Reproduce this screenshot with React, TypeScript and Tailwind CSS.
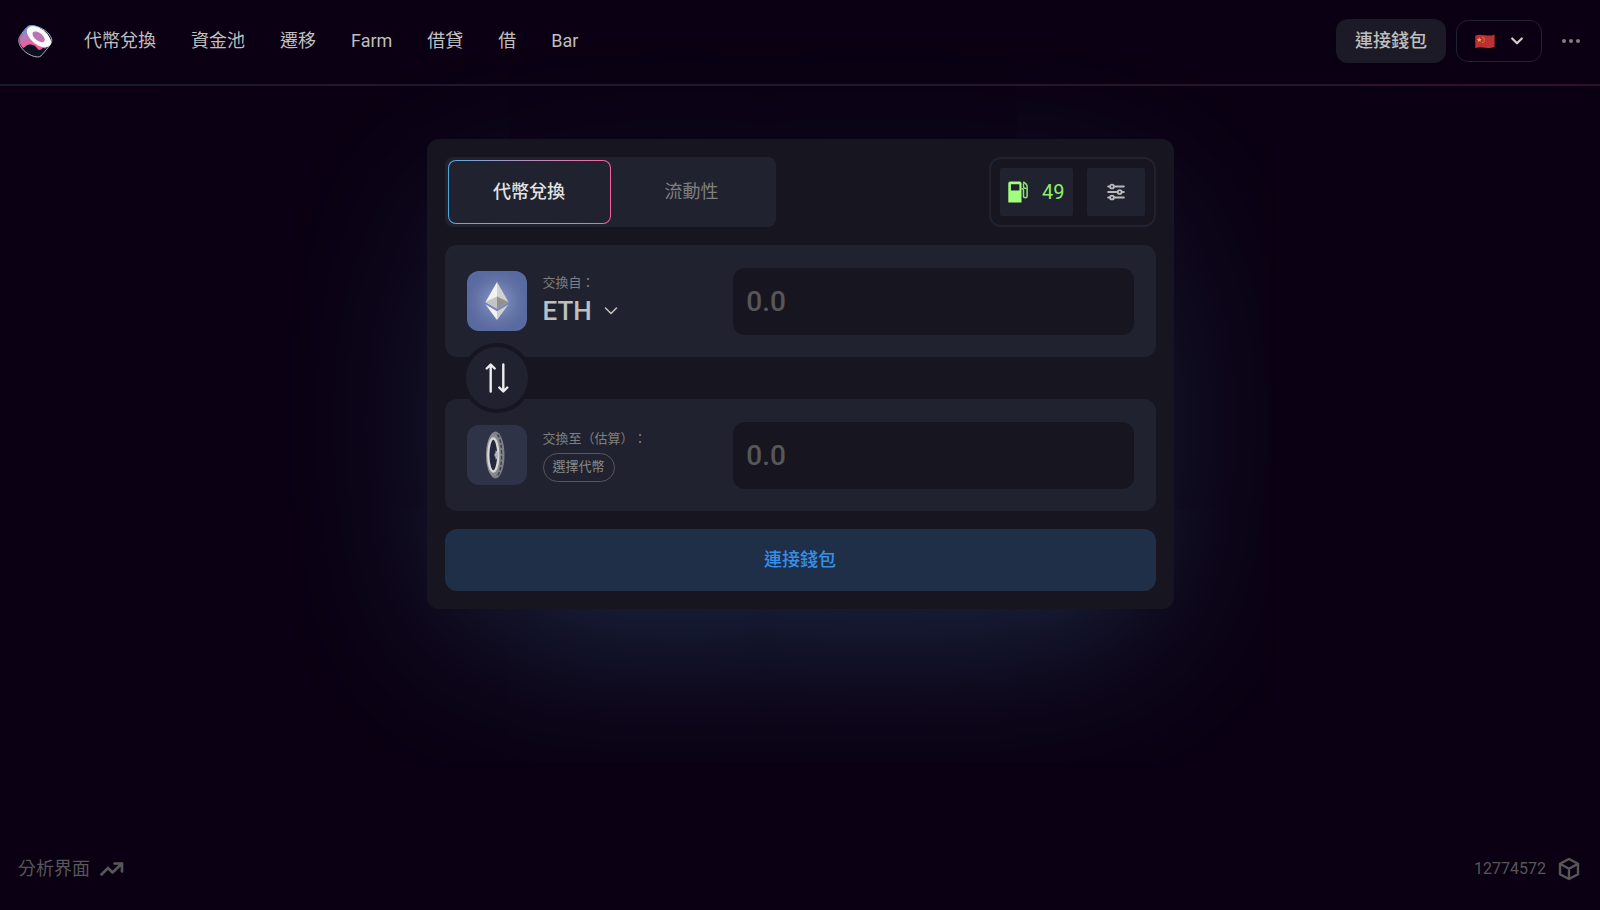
import React, { useState } from 'react'

const navLinks = ['代幣兌換', '資金池', '遷移', 'Farm', '借貸', '借', 'Bar']

function Logo() {
  return (
    <svg viewBox="0 0 35 33" className="w-[35px] h-[33px]" aria-hidden="true">
      <defs>
        <linearGradient id="logo-side" x1="0.3" y1="0" x2="0.45" y2="1">
          <stop offset="0" stopColor="#5fa3dd" />
          <stop offset="0.35" stopColor="#a77fc0" />
          <stop offset="0.7" stopColor="#e8639f" />
          <stop offset="1" stopColor="#f1599c" />
        </linearGradient>
      </defs>
      <path d="M10.500 1.200C8.600 1.600 1.800 10.600 1 13.600c-1.400 6 4.200 13.400 12.400 16.900 4.300 1.900 8.200 1.900 9.700.3 2-2.100 9.600-11 10.500-13.600C35 12.500 29.500 6 22.500 2.900 17.800.8 13.300.4 10.500 1.200Z" fill="#0e0f23" stroke="#c3c3cd" strokeWidth="0.9" />
      <path d="M9.800 1.800C7.900 3 2.500 10.500 1.700 13.200c-.8 3 .4 6.300 3.300 9.800 1.700-.2 3.300-2.900 5.300-3.200 2.800-.6 4.300.3 6 .7 1.800.6 3 4 5 4.600 1.700 0 2.500-1.800 3.700-2.100 1.300 0 1.700.7 2.500.4L33.400 17Z" fill="url(#logo-side)" />
      <path d="M10.200 2.200C12 .8 16 .8 20.500 2.400" fill="none" stroke="#5fa3dd" strokeWidth="1.500" />
      <ellipse cx="21" cy="11.700" rx="14" ry="7.900" transform="rotate(38 21 11.700)" fill="#fbf8fc" />
      <ellipse cx="20.600" cy="11.800" rx="7.200" ry="3.800" transform="rotate(38 20.600 11.800)" fill="#bd72b6" />
    </svg>
  )
}

function ChinaFlag() {
  return (
    <svg viewBox="0 0 20 15" className="w-5 h-[15px]" aria-hidden="true">
      <path d="M.3 1.700C4 .2 6.500.9 10 1.300s6.500.5 9.600-.9v12.300c-3.200 1.500-6 1.500-9.400 1.100-3.600-.5-6.400-.9-9.900.4Z" fill="#bb2f35" />
      <path d="M4.300 3.200l.7 1.700 1.700.1-1.300 1.200.4 1.800-1.500-1-1.500 1 .4-1.800-1.300-1.200 1.700-.1Z" fill="#e8b53a" />
      <g fill="#e8b53a">
        <circle cx="8" cy="3.200" r="0.600" />
        <circle cx="9.200" cy="4.900" r="0.600" />
        <circle cx="9.100" cy="7" r="0.600" />
        <circle cx="7.800" cy="8.500" r="0.600" />
      </g>
    </svg>
  )
}

function ChevronSolid() {
  return (
    <svg viewBox="0 0 12 8" className="w-3 h-2" fill="none" stroke="#cfcfcf" strokeWidth="2.200" strokeLinecap="round" strokeLinejoin="round" aria-hidden="true">
      <path d="M1.200 1.500 6 6.300l4.800-4.800" />
    </svg>
  )
}

function GasIcon() {
  return (
    <svg viewBox="0 0 20 22" className="w-5 h-[22px]" aria-hidden="true">
      <path fillRule="evenodd" d="M2.500.5h9c1.200 0 2 .8 2 2v19H.3V2.500C.3 1.300 1.200.5 2.500.5ZM2.900 3.300v6.200h8.500V3.300Z" fill="#a1ff7d" />
      <path d="M13.500 7.800h.8c.8 0 1.200.5 1.200 1.200v6.300c0 1.900 3.600 1.900 3.600 0V5.600c0-1-.4-1.800-1-2.500L15.300.8" fill="none" stroke="#8fe670" strokeWidth="1.500" />
      <path d="M15.500 2.200v3.600c0 1.100 1 1.800 3.300 1.800" fill="none" stroke="#8fe670" strokeWidth="1.400" />
    </svg>
  )
}

function SlidersIcon() {
  return (
    <svg viewBox="0 0 18 18" className="w-[18px] h-[18px]" fill="none" stroke="#b9b9bb" strokeWidth="1.900" strokeLinecap="round" aria-hidden="true">
      <path d="M1.200 3.500h1.700M7.200 3.500h9.600M1.200 9h9.300M14.800 9h2M1.200 14.500h1.700M7.200 14.500h9.600" />
      <circle cx="5" cy="3.500" r="1.900" />
      <circle cx="12.700" cy="9" r="1.900" />
      <circle cx="5" cy="14.500" r="1.900" />
    </svg>
  )
}

function EthIcon() {
  return (
    <svg viewBox="0 0 60 60" className="w-[60px] h-[60px] rounded-xl shrink-0" aria-hidden="true">
      <defs>
        <radialGradient id="eth-bg">
          <stop offset="0" stopColor="#8697ca" />
          <stop offset="0.700" stopColor="#6373a6" />
          <stop offset="1" stopColor="#586aa0" />
        </radialGradient>
      </defs>
      <rect width="60" height="60" fill="url(#eth-bg)" />
      <path d="M30 11 18.500 31 30 37.500Z" fill="#f2f2f2" />
      <path d="M30 11 41.500 31 30 37.500Z" fill="#d2d2d2" />
      <path d="M30 25.500 18.500 31 30 37.500Z" fill="#c4c4c4" />
      <path d="M30 25.500 41.500 31 30 37.500Z" fill="#929292" />
      <path d="M18.500 33.500 30 40.300V49Z" fill="#f2f2f2" />
      <path d="M41.500 33.500 30 40.300V49Z" fill="#cfcfcf" />
    </svg>
  )
}

function CoinIcon() {
  return (
    <svg viewBox="0 0 60 60" className="w-[60px] h-[60px] rounded-xl shrink-0" aria-hidden="true">
      <rect width="60" height="60" fill="#2e3348" />
      <ellipse cx="28.500" cy="30" rx="9" ry="23.500" fill="#808184" />
      <path d="M30.500 9.500c3 3.500 4 12 4 20.500s-1 17-4 20.500" fill="none" stroke="#3a3f52" strokeWidth="1.500" strokeDasharray="3.500 2" />
      <ellipse cx="26.300" cy="30" rx="7.300" ry="21" fill="#8a8b8e" />
      <ellipse cx="26.300" cy="30" rx="5" ry="16.500" fill="#23283f" stroke="#d6d6d6" strokeWidth="2.300" />
      <path d="M28.500 25.500c2 .5 3 2.500 3 4.500s-1 4-3 4.500v-3h-1v-3h1Z" fill="#b5b6ba" />
    </svg>
  )
}

function SwapArrows() {
  return (
    <svg viewBox="0 0 26 30" className="w-[26px] h-[30px]" fill="none" stroke="#ececec" strokeWidth="2.400" strokeLinecap="round" strokeLinejoin="round" aria-hidden="true">
      <path d="M6.700 28.500V2M2.700 5.500l4-4 4 4" />
      <path d="M19.300 1.500V28M15.300 24.500l4 4 4-4" />
    </svg>
  )
}

interface AmountPropTypes {
  label: string;
  value: string;
  onChange: (value: string) => void;
}

function AmountInput({ label, value, onChange }: AmountPropTypes) {
  return (
    <div className="w-3/5 rounded-xl bg-[#171520] px-[13px]">
      <input
        aria-label={label}
        placeholder="0.0"
        inputMode="decimal"
        value={value}
        onChange={(e) => onChange(e.target.value)}
        className="block w-full h-[67px] bg-transparent text-[28px] font-medium text-[#e3e3e3] placeholder:text-[#575757] outline-none"
      />
    </div>
  )
}

export default function App() {
  const [from, setFrom] = useState('')
  const [to, setTo] = useState('')

  return (
    <div
      lang="zh-TW"
      className="min-h-screen flex flex-col bg-[#0b0013] text-[18px] leading-6 text-[#bfbfbf] font-['Roboto','Noto_Sans_CJK_TC',sans-serif] [text-spacing-trim:space-all]"
    >
      {/* header */}
      <header>
        <div className="flex items-center justify-between h-[84px] pl-[18px] pr-[10px] pb-[2px]">
          <div className="flex items-center gap-[31px]">
            <a href="#home" aria-label="Sushi"><Logo /></a>
            <nav className="flex items-center gap-[35px]">
              {navLinks.map((name) => (
                <a key={name} href={`#${name}`} className="whitespace-nowrap">{name}</a>
              ))}
            </nav>
          </div>
          <div className="flex items-center gap-[10px]">
            <button className="h-11 px-[19px] rounded-xl bg-[#1b1a26] font-medium">連接錢包</button>
            <button aria-label="語言" className="flex items-center justify-center gap-4 w-[86px] h-[42px] rounded-xl border border-[#202231]">
              <ChinaFlag />
              <ChevronSolid />
            </button>
            <button aria-label="更多" className="flex items-center justify-center w-[38px] h-10">
              <svg viewBox="0 0 18 4" className="w-[18px] h-1" fill="#7f7f7f" aria-hidden="true">
                <circle cx="2" cy="2" r="2" />
                <circle cx="9" cy="2" r="2" />
                <circle cx="16" cy="2" r="2" />
              </svg>
            </button>
          </div>
        </div>
        <div className="h-[2px] bg-linear-to-r from-[#161c2d] to-[#2f1229]" />
      </header>

      {/* swap card */}
      <main className="flex-1 flex flex-col items-center pt-[53px]">
        <div className="w-full max-w-[747px] p-[18px] rounded-xl bg-[#171520] shadow-[0_50px_180px_-47px_rgba(75,160,205,0.38)]">
          <div className="flex items-center justify-between">
            <div className="flex h-[70px] p-[3px] rounded-lg bg-[#202230]">
              <div className="w-[163px] p-px rounded-lg bg-linear-to-r from-[#4fa9e0] to-[#f5619f]">
                <button className="w-full h-full rounded-[7px] bg-[#202230] font-medium text-[#e3e3e3]">代幣兌換</button>
              </div>
              <button className="w-[162px] text-[#7f7f7f]">流動性</button>
            </div>
            <div className="flex items-center gap-[14px] h-[70px] px-[9px] rounded-xl border-2 border-[#202230]">
              <div className="flex items-center gap-[14px] h-12 px-2 rounded-xs bg-[#202230] text-[20px] text-[#8ff06d]">
                <GasIcon />
                <span>49</span>
              </div>
              <button aria-label="設定" className="flex items-center justify-center w-[58px] h-12 rounded-xs bg-[#202230]">
                <SlidersIcon />
              </button>
            </div>
          </div>

          <section className="flex items-center justify-between h-28 mt-[18px] px-[22px] rounded-xl bg-[#202230]">
            <div className="flex items-center gap-4">
              <EthIcon />
              <div className="flex flex-col items-start">
                <span className="text-[13px] leading-5 text-[#7f7f7f]">交換自：</span>
                <button className="flex items-center gap-3 text-[26px] leading-9 font-medium">
                  ETH
                  <svg viewBox="0 0 14 8" className="w-[14px] h-2" fill="none" stroke="#bfbfbf" strokeWidth="1.600" strokeLinecap="round" strokeLinejoin="round" aria-hidden="true">
                    <path d="M1.500 1 7 6.500 12.500 1" />
                  </svg>
                </button>
              </div>
            </div>
            <AmountInput label="交換自" value={from} onChange={setFrom} />
          </section>

          {/* overlaps both panels */}
          <div className="relative z-10 flex items-center h-[42px] pl-[17px]">
            <button
              aria-label="對調"
              onClick={() => { setFrom(to); setTo(from) }}
              className="flex items-center justify-center shrink-0 w-[70px] h-[70px] rounded-full border-4 border-[#171520] bg-[#202230]"
            >
              <SwapArrows />
            </button>
          </div>

          <section className="flex items-center justify-between h-28 px-[22px] rounded-xl bg-[#202230]">
            <div className="flex items-center gap-4">
              <CoinIcon />
              <div className="flex flex-col items-start gap-1">
                <span className="text-[13px] leading-5 text-[#7f7f7f]">交換至（估算）：</span>
                <button className="h-[29px] px-[9px] rounded-full border border-[#575757] text-[13px] text-[#8a8a8a]">選擇代幣</button>
              </div>
            </div>
            <AmountInput label="交換至" value={to} onChange={setTo} />
          </section>

          <button className="w-full h-[62px] mt-[18px] rounded-xl bg-[#1e2f47] font-medium text-[#368fe8]">連接錢包</button>
        </div>
      </main>

      {/* footer */}
      <footer className="flex items-center justify-between pl-[18px] pr-5 pb-[29px] text-[#575757]">
        <a href="#analytics" className="flex items-center gap-[10px]">
          分析界面
          <svg viewBox="0 0 24 14" className="w-6 h-[14px]" fill="none" stroke="currentColor" strokeWidth="2.600" strokeLinecap="round" strokeLinejoin="round" aria-hidden="true">
            <path d="M1.500 12.500 8 6l4.500 4.500L22 1.500M14.500 1.500H22V9.500" />
          </svg>
        </a>
        <a href="#block" className="flex items-center gap-3 text-[16px]">
          12774572
          <svg viewBox="0 0 22 24" className="w-[22px] h-6" fill="none" stroke="currentColor" strokeWidth="2.400" strokeLinejoin="round" aria-hidden="true">
            <path d="M11 2 20 6.800v10.400L11 22 2 17.200V6.800ZM2 6.800l9 4.900 9-4.900M11 11.700V22" />
          </svg>
        </a>
      </footer>
    </div>
  )
}
